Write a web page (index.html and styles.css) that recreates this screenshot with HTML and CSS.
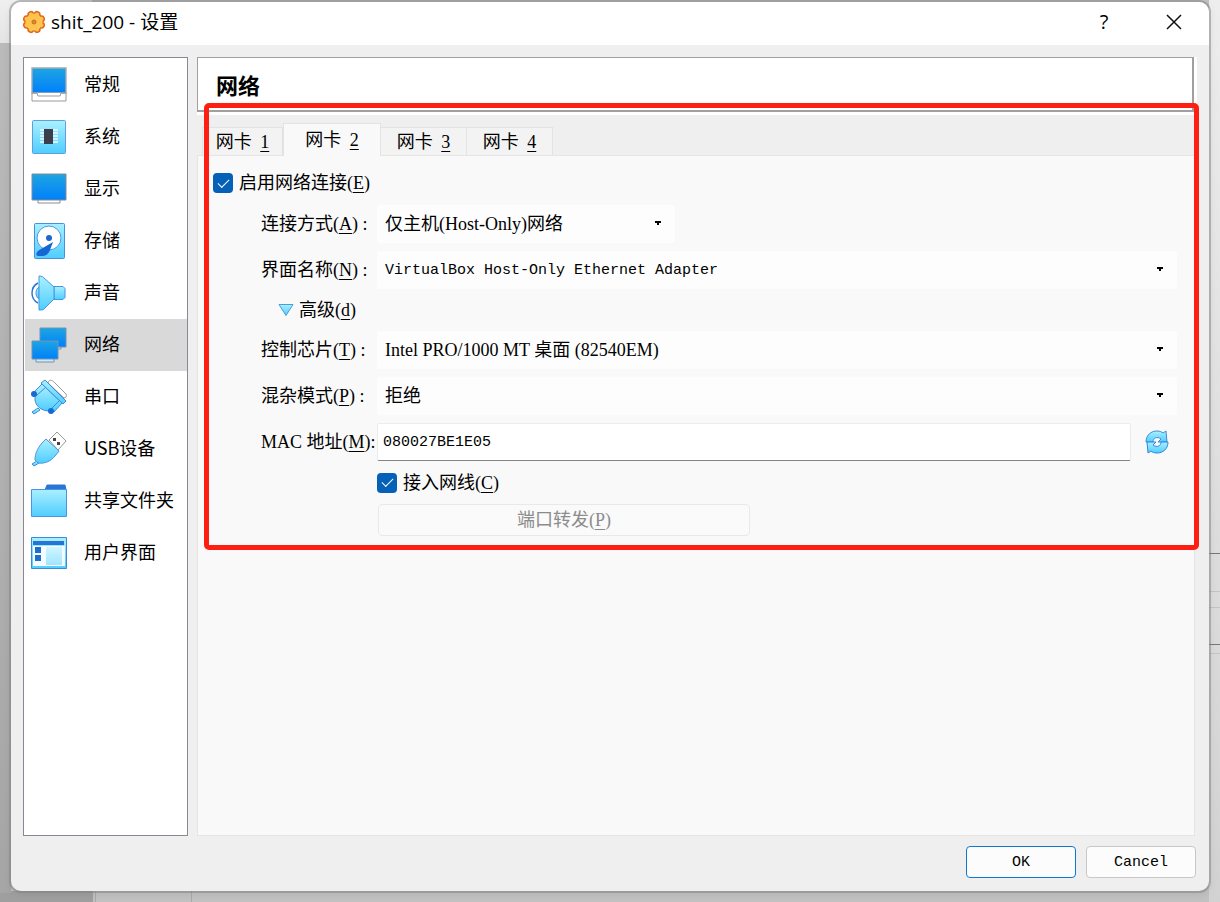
FILE: index.html
```html
<!DOCTYPE html>
<html lang="zh-CN">
<head>
    <meta charset="UTF-8">
    <meta name="viewport" content="width=device-width, initial-scale=1.0">
    <title>shit_200 - 设置</title>
    <link rel="stylesheet" href="styles.css">
</head>
<body>
    <!-- shared gradients for the icons -->
    <svg class="defs" width="0" height="0" aria-hidden="true">
        <defs>
            <linearGradient id="screen" x1="0" y1="0" x2="0" y2="1"><stop offset="0" stop-color="#1ea5e2"/><stop offset="1" stop-color="#0080fb"/></linearGradient>
            <linearGradient id="ice" x1="0" y1="0" x2="0" y2="1"><stop offset="0" stop-color="#aaf0ff"/><stop offset="1" stop-color="#4fcdff"/></linearGradient>
            <linearGradient id="gear" x1="0" y1="0" x2="0" y2="1"><stop offset="0" stop-color="#ffb84f"/><stop offset="1" stop-color="#ffd952"/></linearGradient>
        </defs>
    </svg>
    <div class="dialog">
        <header class="titlebar">
            <svg class="app-icon" viewBox="0 0 24 24">
                <g stroke="#e0691a" stroke-width="7" stroke-linecap="round">
                    <path d="M8.900 4.500l6.200 15M15.100 4.500l-6.200 15M4.500 8.900l15 6.200M4.500 15.100l15-6.200"/>
                </g>
                <circle cx="12" cy="12" r="9.500" fill="#e0691a"/>
                <circle cx="12" cy="12" r="8.500" fill="url(#gear)"/>
                <g stroke="#ffc44f" stroke-width="4" stroke-linecap="round">
                    <path d="M8.900 4.500l6.200 15M15.100 4.500l-6.200 15M4.500 8.900l15 6.200M4.500 15.100l15-6.200"/>
                </g>
                <circle cx="12" cy="12" r="2" fill="#d9902b" stroke="#c96c1c"/>
            </svg>
            <h1>shit_200 - 设置</h1>
            <button class="title-btn" type="button" aria-label="Help"><span>?</span></button>
            <button class="title-btn" type="button" aria-label="Close">
                <svg width="16" height="20" viewBox="0 0 16 20"><path d="M1 1l14 14M15 1L1 15" stroke="#111" stroke-width="1.500" fill="none"/></svg>
            </button>
        </header>
        <div class="content">
            <nav class="sidebar">
                <a href="#general">
                    <svg viewBox="0 0 36 36"><path d="M1 25h34v9H1z" fill="#fff" stroke="#9a9a9a"/><path d="M1 1h34v25H1z" fill="url(#screen)" stroke="#a5abb0" stroke-width="1.400"/><path d="M1 26h5l1 3h22l1-3h5" fill="#fff" stroke="#9a9a9a"/></svg>
                    <span>常规</span>
                </a>
                <a href="#system">
                    <svg viewBox="0 0 36 36"><rect x="1.500" y="1.500" width="33" height="33" rx="1" fill="url(#ice)" stroke="#5d9fe0"/><path d="M9 11h18M9 14h18M9 17h18M9 20h18M9 23h18" stroke="#effcff" stroke-width="1.500"/><path d="M13 10h9v15h-9z" fill="#3b3f4c"/></svg>
                    <span>系统</span>
                </a>
                <a href="#display">
                    <svg viewBox="0 0 36 36"><path d="M7 28v4h22v-4" fill="#fff" stroke="#8e8e8e"/><path d="M1 3h34v26H1z" fill="url(#screen)" stroke="#858b92"/></svg>
                    <span>显示</span>
                </a>
                <a href="#storage">
                    <svg viewBox="0 0 36 36"><rect x="3.500" y=".5" width="30" height="35" rx="1" fill="url(#ice)" stroke="#4790dd"/><circle cx="18" cy="15" r="12" fill="#fff" stroke="#4a99e8"/><circle cx="18" cy="15" r="3" fill="#1b68cc"/><path d="M22 19l-12 7c-5 2-6 7-3 7h5c3 0 6-3 7-6z" fill="#1568d2"/></svg>
                    <span>存储</span>
                </a>
                <a href="#audio">
                    <svg viewBox="0 0 36 36"><path d="M7 8C-1 12-1 24 7 28" fill="none" stroke="#2a72d0" stroke-width="1.400"/><path d="M8 12c-4 2-4 10 0 12z" fill="url(#ice)" stroke="#4a96e0"/><path d="M23 11.500h9l2 2v9l-2 2h-9z" fill="url(#ice)" stroke="#4496e0"/><path d="M8 1c3 0 4 1 5 2l10 9v12L13 34c-1 1-2 1-5 1z" fill="url(#ice)" stroke="#4496e0"/></svg>
                    <span>声音</span>
                </a>
                <a href="#network" class="current">
                    <svg viewBox="0 0 36 36"><path d="M13 20v2h17v-2" fill="#cde8fa" stroke="#7992aa"/><path d="M9 1h26v19H9z" fill="url(#screen)" stroke="#6e94b4"/><path d="M5 32v3h18v-3" fill="#cde8fa" stroke="#7992aa"/><path d="M1 14h26v18H1z" fill="url(#screen)" stroke="#6e94b4"/></svg>
                    <span>网络</span>
                </a>
                <a href="#serial">
                    <svg viewBox="0 0 36 36"><path d="M17 4c1-4 4-3 6-1l12 12c1 2 0 4-2 4z" fill="#fff" stroke="#999"/><path d="M7 29l-6 4 2 2 6-4z" fill="url(#ice)" stroke="#3c8cda"/><path d="M12 6L4 18c-1 8 6 14 14 14l12-9z" fill="url(#ice)" stroke="#3c8cda"/><path d="M11 5L2 14l3 3 10-9zM29 21l-9 9 3 3 9-10z" fill="url(#ice)" stroke="#3c8cda"/><path d="M10 4l4-3 21 21-3 3z" fill="url(#ice)" stroke="#3c8cda"/><circle cx="3" cy="15" r="3" fill="#176bd0"/><circle cx="20" cy="32" r="3" fill="#176bd0"/></svg>
                    <span>串口</span>
                </a>
                <a href="#usb">
                    <svg viewBox="0 0 36 36"><path d="M18 9l8-8 9 9-8 9z" fill="#fff" stroke="#999"/><path d="M22 7h3v3h-3zM26 11h3v3h-3z" fill="#444"/><path d="M6 30l-5 3 2 2 5-3z" fill="url(#ice)" stroke="#3c8cda"/><path d="M15 8l13 12-4 5c-4 5-10 8-17 7l-3-3c0-6 2-11 7-17z" fill="url(#ice)" stroke="#4b96dc"/></svg>
                    <span>USB设备</span>
                </a>
                <a href="#shared">
                    <svg viewBox="0 0 36 36"><path d="M14 7l2-5h18l1 5z" fill="#2b76d5" stroke="#2b76d5"/><path d="M.5 6.500h35v27H.5z" fill="url(#ice)" stroke="#4994dc"/></svg>
                    <span>共享文件夹</span>
                </a>
                <a href="#interface">
                    <svg viewBox="0 0 36 36"><path d="M.5 2.500h35v31H.5z" fill="url(#ice)" stroke="#3c8ad6"/><path d="M2 11h32v20H2z" fill="#f4fcff"/><path d="M2 6h31v4H2z" fill="#2874d4"/><path d="M4 12h6v6H4zM4 20h6v6H4z" fill="#1e6ed2"/><path d="M15 12h16v18H15z" fill="url(#ice)" opacity=".5"/></svg>
                    <span>用户界面</span>
                </a>
            </nav>
            <main class="page">
                <div class="page-title"><h2>网络</h2></div>
                <div class="tabs" role="tablist">
                    <button type="button" role="tab" class="tab">网卡 <u>1</u></button>
                    <button type="button" role="tab" class="tab active" aria-selected="true">网卡 <u>2</u></button>
                    <button type="button" role="tab" class="tab">网卡 <u>3</u></button>
                    <button type="button" role="tab" class="tab">网卡 <u>4</u></button>
                </div>
                <form class="panel">
                    <label class="check wide"><input type="checkbox" checked><span>启用网络连接(<u>E</u>)</span></label>

                    <label for="attached">连接方式(<u>A</u>)&nbsp;:</label>
                    <select id="attached" class="short"><option>仅主机(Host-Only)网络</option></select>

                    <label for="name">界面名称(<u>N</u>)&nbsp;:</label>
                    <select id="name" class="latin"><option>VirtualBox Host-Only Ethernet Adapter</option></select>

                    <button type="button" class="advanced wide">
                        <svg width="16" height="14" viewBox="0 0 16 14"><path d="M1 1.500h14L8 12.500z" fill="url(#ice)" stroke="#4a9be0" stroke-linejoin="round"/></svg>
                        <span>高级(<u>d</u>)</span>
                    </button>

                    <label for="chip">控制芯片(<u>T</u>)&nbsp;:</label>
                    <select id="chip"><option>Intel PRO/1000 MT 桌面 (82540EM)</option></select>

                    <label for="promisc">混杂模式(<u>P</u>)&nbsp;:</label>
                    <select id="promisc"><option>拒绝</option></select>

                    <label for="mac">MAC 地址(<u>M</u>):</label>
                    <div class="mac">
                        <input type="text" id="mac" class="latin" value="080027BE1E05">
                        <button type="button" class="refresh" aria-label="刷新">
                            <svg width="24" height="24" viewBox="0 0 24 24">
                                <path d="M1 12C1 5 6 1 12 1c3 0 5 1 6 2l3-2 1 11h-9l3-3c-4-3-8-1-8 3z" fill="url(#ice)" stroke="#4588d4" stroke-linejoin="round"/>
                                <path d="M23 12c0 7-5 11-11 11-3 0-5-1-6-2l-3 2-1-11h9l-3 3c4 3 8 1 8-3z" fill="url(#ice)" stroke="#2f86dc" stroke-linejoin="round"/>
                            </svg>
                        </button>
                    </div>

                    <label class="check field"><input type="checkbox" checked><span>接入网线(<u>C</u>)</span></label>
                    <button type="button" class="btn forward field" disabled>端口转发(<u>P</u>)</button>
                </form>
                <div class="marker"></div>
            </main>
        </div>
        <footer>
            <button type="button" class="btn primary latin">OK</button>
            <button type="button" class="btn latin">Cancel</button>
        </footer>
    </div>
</body>
</html>
```
FILE: styles.css
```css
* {
    box-sizing: border-box;
}
body {
    display: flex;
    min-height: 100vh;
    margin: 0;
    padding: 2px 11px 11px;
    font: 18px/24px "Liberation Serif", "Noto Sans CJK SC", serif;
    color: #000;
    /* windows that show behind the dialog */
    background:
        linear-gradient(#777, #777) right 0 top 553px / 11px 1px no-repeat,
        linear-gradient(#c4c4c4, #c4c4c4) right 0 top 591px / 11px 1px no-repeat,
        linear-gradient(#c4c4c4, #c4c4c4) right 0 top 607px / 11px 1px no-repeat,
        linear-gradient(#777, #777) right 0 top 644px / 11px 1px no-repeat,
        linear-gradient(#c4c4c4, #c4c4c4) right 0 top 653px / 11px 1px no-repeat,
        linear-gradient(#efefef, #e4e4e4) 0 0 / 92px 43px no-repeat,
        linear-gradient(#bababa, #a6a6a6) 0 43px / 11px 850px no-repeat,
        linear-gradient(#ededed, #d2d2d2) right top / 11px 902px no-repeat,
        linear-gradient(#9f9f9f, #9f9f9f) left bottom / 93px 11px no-repeat,
        linear-gradient(#a9a9a9, #a9a9a9) 95px bottom / 1px 11px no-repeat,
        linear-gradient(#a9a9a9, #a9a9a9) 191px bottom / 1px 11px no-repeat,
        #c1c1c1;
}
button, input, select {
    font: inherit;
    color: inherit;
}
h1, h2 {
    margin: 0;
}
u {
    text-underline-offset: 3px;
}
.defs {
    position: absolute;
}
.dialog {
    flex: 1;
    display: flex;
    flex-direction: column;
    min-width: 0;
    background: #efefef;
    border-radius: 10px;
    box-shadow: 0 0 0 2px rgba(130, 130, 130, 0.5), 0 2px 8px rgba(0, 0, 0, 0.1);
    overflow: hidden;
}

/* title bar */
.titlebar {
    display: flex;
    align-items: center;
    height: 43px;
    padding: 0 0 3px 11px;
    background: #fff;
}
.app-icon {
    width: 24px;
    height: 24px;
    margin-right: 5px;
}
.titlebar h1 {
    flex: 1;
    font: 19px/24px "Open Sans", "Noto Sans CJK SC", sans-serif;
}
.title-btn {
    display: flex;
    align-items: center;
    justify-content: center;
    width: 70px;
    height: 40px;
    padding: 0;
    border: none;
    background: none;
    font: 20px/24px "Open Sans", sans-serif;
}
.title-btn svg {
    margin-top: 4px;
}

/* layout */
.content {
    flex: 1;
    display: flex;
    gap: 9px;
    padding: 12px 12px 0;
}
.sidebar {
    width: 165px;
    padding: 1px 0 1px 1px;
    border: 1px solid #898993;
    background: #fff;
    font: 18px/24px "Noto Sans CJK SC", sans-serif;
}
.sidebar a {
    display: flex;
    align-items: center;
    gap: 17px;
    height: 52px;
    padding-left: 6px;
    color: #000;
    text-decoration: none;
    white-space: nowrap;
}
.sidebar a.current {
    background: #d9d9d9;
}
.sidebar svg {
    flex: none;
    width: 36px;
    height: 36px;
}
.sidebar span {
    padding-bottom: 4px;
}
.page {
    flex: 1;
    display: flex;
    flex-direction: column;
    min-width: 0;
    position: relative;
}
.page-title {
    padding: 0 3px 3px 0;
    background: #fff;
}
.page-title h2 {
    height: 55px;
    padding: 10px 18px;
    border: solid #a0a0a0;
    border-width: 1px 2px 2px 1px;
    font: bold 22px/32px "Noto Sans CJK SC", sans-serif;
}

/* tabs */
.tabs {
    display: flex;
    align-items: flex-end;
    height: 41px;
    padding-left: 5px;
}
.tab {
    width: 86px;
    height: 29px;
    padding: 0;
    border: 1px solid #e3e3e3;
    border-left: none;
    background: #f3f3f3;
    white-space: pre;
}
.tab u {
    margin-left: 4px;
}
.tab:first-child {
    width: 81px;
    border-left: 1px solid #e3e3e3;
}
.tab.active {
    width: 98px;
    height: 33px;
    border: 1px solid #e3e3e3;
    border-bottom: none;
    background: #f9f9f9;
    z-index: 1;
}
.panel {
    flex: 1;
    display: grid;
    grid-template-columns: 156px 1fr;
    grid-auto-rows: min-content;
    align-items: center;
    gap: 8px;
    margin: -1px 2px 0 0;
    padding: 13px 17px 0 15px;
    border: 1px solid #e5e5e5;
    background: #f9f9f9;
}

/* form */
.panel > label {
    padding-left: 48px;
    white-space: nowrap;
}
.wide {
    grid-column: 1 / 3;
}
.field {
    grid-column: 2;
}
.panel > .check {
    display: flex;
    align-items: center;
    gap: 6px;
    height: 27px;
    padding: 0;
}
.panel > .check.wide {
    height: 28px;
}
.check input {
    appearance: none;
    display: grid;
    place-items: center;
    width: 20px;
    height: 20px;
    margin: 0;
    border-radius: 4px;
    background: #0560b8;
}
.check input:checked::before {
    content: "";
    width: 10px;
    height: 5px;
    margin-bottom: 3px;
    border: solid #fff;
    border-width: 0 0 1px 1px;
    transform: rotate(-45deg);
}
select {
    appearance: none;
    width: 100%;
    height: 38px;
    padding: 0 30px 0 8px;
    border: none;
    border-radius: 2px;
    background:
        linear-gradient(#000, #000) right 14px top 16px / 6px 2px no-repeat,
        linear-gradient(#000, #000) right 16px top 18px / 2px 2px no-repeat,
        #fdfdfd;
}
select.short {
    width: 298px;
}
.latin {
    padding-top: 2px;
    font: 15px/24px "Liberation Mono", monospace;
}
.advanced {
    display: flex;
    align-items: center;
    gap: 5px;
    justify-self: start;
    height: 26px;
    margin-left: 65px;
    padding: 0;
    border: none;
    background: none;
}
.mac {
    display: flex;
    gap: 6px;
}
.mac input {
    flex: 1;
    min-width: 0;
    height: 38px;
    padding: 0 5px;
    border: 1px solid #ececec;
    border-bottom-color: #868686;
    border-radius: 2px;
    background: #fff;
}
.refresh {
    display: flex;
    align-items: center;
    justify-content: center;
    width: 40px;
    padding: 0;
    border: none;
    background: none;
}

/* push buttons */
.btn {
    width: 110px;
    height: 32px;
    padding: 0;
    border: 1px solid #c8c8c8;
    border-radius: 4px;
    background: #fcfcfc;
}
.btn.latin {
    padding-top: 2px;
}
.btn.primary {
    border-color: #0f78d0;
}
.btn.forward {
    width: 372px;
    margin-left: 1px;
    border-color: #e9e9e9;
    background: #fafafa;
    color: #8c8c8c;
}
.marker {
    position: absolute;
    top: 46px;
    right: -2px;
    left: 7px;
    height: 447px;
    border: 5px solid #ff1e12;
    border-radius: 5px;
    pointer-events: none;
    z-index: 2;
}
footer {
    display: flex;
    justify-content: flex-end;
    gap: 10px;
    padding: 10px 13px 13px;
}
```
